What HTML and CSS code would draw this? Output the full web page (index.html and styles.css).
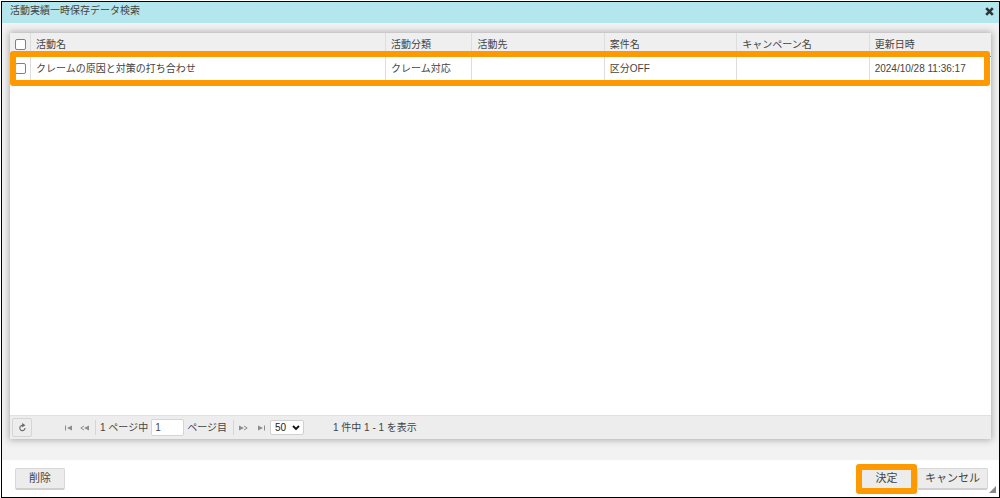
FILE: index.html
```html
<!DOCTYPE html>
<html lang="ja">
<head>
<meta charset="utf-8">
<title>活動実績一時保存データ検索</title>
<link rel="stylesheet" href="styles.css">
</head>
<body>
<main class="dialog">
  <header class="titlebar">
    <h1 class="title">活動実績一時保存データ検索</h1>
    <button class="close" type="button" aria-label="閉じる">
      <svg width="9" height="9" viewBox="0 0 9 9"><path d="M1.2 1.2 7.8 7.8M7.8 1.2 1.2 7.8" stroke="#2b3538" stroke-width="2.6" fill="none"/></svg>
    </button>
  </header>
  <section class="content">
    <div class="panel">
      <div class="grid">
        <table class="table">
          <colgroup><col class="c-check"><col class="c-name"><col class="c-type"><col class="c-wide"><col class="c-wide"><col class="c-wide"><col></colgroup>
          <thead>
            <tr>
              <th class="check"><input class="box" type="checkbox" aria-label="すべて選択"></th>
              <th>活動名</th><th>活動分類</th><th>活動先</th><th>案件名</th><th>キャンペーン名</th><th>更新日時</th>
            </tr>
          </thead>
          <tbody>
            <tr class="row">
              <td class="check"><input class="box" type="checkbox" aria-label="行を選択"></td>
              <td>クレームの原因と対策の打ち合わせ</td><td>クレーム対応</td><td></td><td>区分OFF</td><td></td>
              <td>2024/10/28 11:36:17<span class="highlight highlight-row"></span></td>
            </tr>
          </tbody>
        </table>
      </div>
      <div class="pager">
        <button class="reload" type="button" aria-label="更新">
          <svg width="9" height="9" viewBox="0 0 9 9" fill="none" stroke="#666"><path d="M4.6 2.4A2.6 2.6 0 1 0 7 5" stroke-width="1.1"/><path d="M4.2 0 7.4 2.2 4.2 4.2z" fill="#666" stroke="none"/></svg>
        </button>
        <div class="nav">
          <button class="step" type="button" aria-label="最初のページ">
            <svg width="10" height="6" viewBox="0 0 10 6"><path d="M1 .5h1v5H1zM3 3 8 .5v5z" fill="#8c8c8c"/></svg>
          </button>
          <button class="step" type="button" aria-label="前のページ">
            <svg width="10" height="6" viewBox="0 0 10 6"><path d="M4 1 .8 3 4 5" fill="none" stroke="#8c8c8c"/><path d="M4 3 9 .5v5z" fill="#8c8c8c"/></svg>
          </button>
        </div>
        <label class="page-label" for="page">1 ページ中</label>
        <input class="page" id="page" type="text" value="1">
        <span class="page-suffix">ページ目</span>
        <div class="nav nav-next">
          <button class="step" type="button" aria-label="次のページ">
            <svg width="10" height="6" viewBox="0 0 10 6"><path d="M6 1 9.2 3 6 5" fill="none" stroke="#8c8c8c"/><path d="M6 3 1 .5v5z" fill="#8c8c8c"/></svg>
          </button>
          <button class="step" type="button" aria-label="最後のページ">
            <svg width="10" height="6" viewBox="0 0 10 6"><path d="M8 .5h1v5H8zM7 3 2 .5v5z" fill="#8c8c8c"/></svg>
          </button>
        </div>
        <span class="size-wrap">
          <select class="size" aria-label="表示件数"><option>50</option></select>
          <svg class="chevron" width="8" height="6" viewBox="0 0 8 6"><path d="M1 1 4 4 7 1" fill="none" stroke="#111" stroke-width="1.8"/></svg>
        </span>
        <span class="count">1 件中 1 - 1 を表示</span>
      </div>
    </div>
  </section>
  <footer class="actions">
    <button class="button" type="button">削除</button>
    <div class="confirm">
      <button class="button button-ok" type="button">決定</button>
      <span class="highlight highlight-ok"></span>
    </div>
    <button class="button button-cancel" type="button">キャンセル</button>
    <svg class="grip" width="7" height="7" viewBox="0 0 7 7"><path d="M0 7 7 0v7z" fill="#888"/></svg>
  </footer>
</main>
</body>
</html>
```
FILE: styles.css
```css
* { box-sizing: border-box; }

body {
  margin: 0;
  height: 100vh;
  padding: 1px 0 0 1px;
  background: #fff;
  color: #444;
  font: 10px/14px "Liberation Sans", "Noto Sans CJK JP", sans-serif;
}

button, input, select { font: inherit; color: inherit; margin: 0; }

button { padding: 0; border: 0; background: none; }

svg { display: block; }

.dialog {
  display: flex;
  flex-direction: column;
  height: 100%;
  border: 1px solid #000;
}

.titlebar {
  display: flex;
  justify-content: space-between;
  height: 21px;
  padding: 1px 5px 0 8px;
  background: #b4e6ed;
}

.title { margin: 0; font-size: 10px; font-weight: normal; line-height: 15px; }

.close { align-self: flex-start; padding-top: 4px; }

.content {
  display: flex;
  flex: 1;
  padding: 10px 8px 21px;
  background: #f2f2f2;
}

.panel {
  display: flex;
  flex: 1;
  flex-direction: column;
  background: #fff;
  box-shadow: 0 0 7px 1px #aaa;
}

.grid { flex: 1; }

.table {
  width: 100%;
  table-layout: fixed;
  border-collapse: separate;
  border-spacing: 0;
}

.c-check { width: 21px; }
.c-name { width: 36.2%; }
.c-type { width: 8.8%; }
.c-wide { width: 13.5%; }

.table th, .table td {
  height: 24px;
  padding: 0 5px;
  text-align: left;
  font-weight: normal;
  white-space: nowrap;
  border-right: 1px solid #ddd;
}

.table th { background: #efefef; border-bottom: 1px solid #4a90b8; }
.table td { border-bottom: 1px solid #ddd; }
.table th:last-child, .table td:last-child { border-right: 0; }
.table .check { padding: 0 0 0 5px; }

.row { position: relative; }

.box {
  display: block;
  appearance: none;
  width: 11px;
  height: 11px;
  border: 1px solid #808080;
  border-radius: 2px;
  background: #fff;
}

.highlight {
  position: absolute;
  border: 6px solid #ff9900;
  border-radius: 3px;
  pointer-events: none;
}

.highlight-row { inset: -6px 1px -5px 0; }
.highlight-ok { inset: -4px 0 -4px; }

.pager {
  display: flex;
  align-items: center;
  height: 24px;
  padding: 0 2px;
  background: #ededed;
  border-top: 1px solid #dde3e3;
}

.reload {
  display: grid;
  place-items: center;
  width: 20px;
  height: 19px;
  border: 1px solid #d5d5d5;
  border-radius: 2px;
}

.nav {
  display: flex;
  align-items: center;
  gap: 6px;
  height: 15px;
  margin-left: 32px;
  padding-right: 5px;
  border-right: 1px solid #d5d5d5;
}

.nav-next {
  gap: 8px;
  margin-left: 6px;
  padding: 0 4px;
  border-right: 0;
  border-left: 1px solid #d5d5d5;
}

.page-label { margin-left: 4px; }

.page {
  width: 33px;
  height: 17px;
  margin: 0 3px;
  padding: 0 3px;
  border: 1px solid #d5d5d5;
  border-radius: 2px;
  background: #fff;
}

.size-wrap { position: relative; }

.size {
  display: block;
  appearance: none;
  width: 34px;
  height: 15px;
  padding: 0 4px;
  border: 1px solid #d0d0d0;
  border-radius: 2px;
  background: #fff;
  color: #222;
}

.chevron { position: absolute; top: 5px; right: 4px; pointer-events: none; }

.count { margin-left: 29px; }

.actions {
  position: relative;
  display: flex;
  align-items: center;
  height: 37px;
  padding: 0 11px 0 13px;
  background: #fff;
}

.button {
  min-width: 50px;
  height: 22px;
  background: #ececec;
  border: 1px solid #d8d8d8;
  border-bottom: 2px solid #cfcfcf;
  border-radius: 2px;
  font-size: 11px;
  line-height: 18px;
}

.confirm { position: relative; margin-left: auto; }
.button-ok { display: block; width: 61px; }
.button-cancel { width: 71px; }

.grip { position: absolute; right: 3px; bottom: 4px; }
```
